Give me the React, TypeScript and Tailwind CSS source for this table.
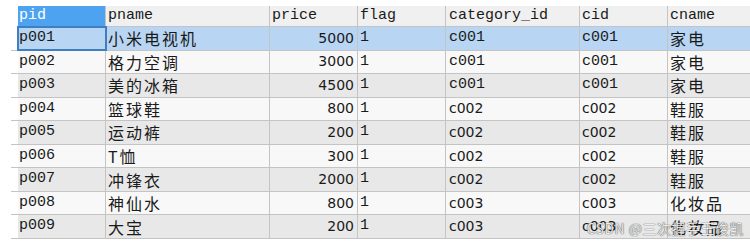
import React from "react";

type Row = {
  pid: string;
  pname: string;
  price: number;
  flag: string;
  categoryId: string;
  cid: string;
  cname: string;
};

const rows: Row[] = [
  { pid: "p001", pname: "小米电视机", price: 5000, flag: "1", categoryId: "c001", cid: "c001", cname: "家电" },
  { pid: "p002", pname: "格力空调", price: 3000, flag: "1", categoryId: "c001", cid: "c001", cname: "家电" },
  { pid: "p003", pname: "美的冰箱", price: 4500, flag: "1", categoryId: "c001", cid: "c001", cname: "家电" },
  { pid: "p004", pname: "篮球鞋", price: 800, flag: "1", categoryId: "c002", cid: "c002", cname: "鞋服" },
  { pid: "p005", pname: "运动裤", price: 200, flag: "1", categoryId: "c002", cid: "c002", cname: "鞋服" },
  { pid: "p006", pname: "T恤", price: 300, flag: "1", categoryId: "c002", cid: "c002", cname: "鞋服" },
  { pid: "p007", pname: "冲锋衣", price: 2000, flag: "1", categoryId: "c002", cid: "c002", cname: "鞋服" },
  { pid: "p008", pname: "神仙水", price: 800, flag: "1", categoryId: "c003", cid: "c003", cname: "化妆品" },
  { pid: "p009", pname: "大宝", price: 200, flag: "1", categoryId: "c003", cid: "c003", cname: "化妆品" },
];

const mono = "font-['Liberation_Mono','Courier_New',monospace] text-[15px]";
const sans = "font-['DejaVu_Sans',Verdana,sans-serif] text-[14px]";
const cjk = "font-['Noto_Sans_CJK_SC','Noto_Sans',sans-serif] text-[16px] tracking-[2px]";

const cell = "h-full flex items-center border-r border-[#c4c4c4] overflow-hidden whitespace-nowrap";

export default function App() {
  return (
    <div className="relative w-[750px] h-[244px] bg-white overflow-hidden pt-[6px] pl-[11px] text-[#1a1a1a]">
      {/* header */}
      <div className="flex h-[21px] border-b border-[#c4c4c4] ml-[7px] bg-[#f0f0f0]">
        <div className={`${cell} w-[88px] bg-[#4da3ef] text-white pl-[1px] ${mono}`}>pid</div>
        <div className={`${cell} w-[164px] pl-[2px] ${mono}`}>pname</div>
        <div className={`${cell} w-[88px] pl-[2px] ${mono}`}>price</div>
        <div className={`${cell} w-[88px] pl-[2px] ${mono}`}>flag</div>
        <div className={`${cell} w-[134px] pl-[3px] ${mono}`}>category_id</div>
        <div className={`${cell} w-[88px] pl-[2px] ${mono}`}>cid</div>
        <div className={`${cell} flex-1 border-r-0 pl-[2px] ${mono}`}>cname</div>
      </div>

      {rows.map((r, i) => {
        const selected = i === 0;
        const bg = selected ? "bg-[#b8d5f3]" : i % 2 === 0 ? "bg-[#e8e8e8]" : "bg-[#f8f8f8]";
        const catFont = r.categoryId === "c001" ? mono : sans;
        return (
          <div key={r.pid} className="flex h-[23.55px] border-b border-[#c4c4c4]">
            <div className="w-[7px] h-full bg-white" />
            <div className={`flex flex-1 h-full ${bg}`}>
              <div
                className={`${cell} w-[88px] pl-[1px] ${mono} ${
                  selected ? "outline-2 -outline-offset-1 outline-[#3f7fc0]" : ""
                }`}
              >
                {r.pid}
              </div>
              <div className={`${cell} w-[164px] pl-[2px] ${cjk}`}>{r.pname}</div>
              <div className={`${cell} w-[88px] justify-end pr-[3px] ${sans}`}>{r.price}</div>
              <div className={`${cell} w-[88px] pl-[2px] ${mono}`}>{r.flag}</div>
              <div className={`${cell} w-[134px] pl-[3px] ${catFont}`}>{r.categoryId}</div>
              <div className={`${cell} w-[88px] pl-[2px] ${catFont}`}>{r.cid}</div>
              <div className={`${cell} flex-1 border-r-0 pl-[2px] ${cjk}`}>{r.cname}</div>
            </div>
          </div>
        );
      })}

      <div className="absolute right-[6px] bottom-[5px] font-['Noto_Sans_CJK_SC','Noto_Sans',sans-serif] text-[14px] text-white/90 [text-shadow:0_0_1px_rgba(0,0,0,0.7),0_0_1px_rgba(0,0,0,0.5)] tracking-[0.5px]">
        CSDN @三次握手王俊凯
      </div>
    </div>
  );
}
